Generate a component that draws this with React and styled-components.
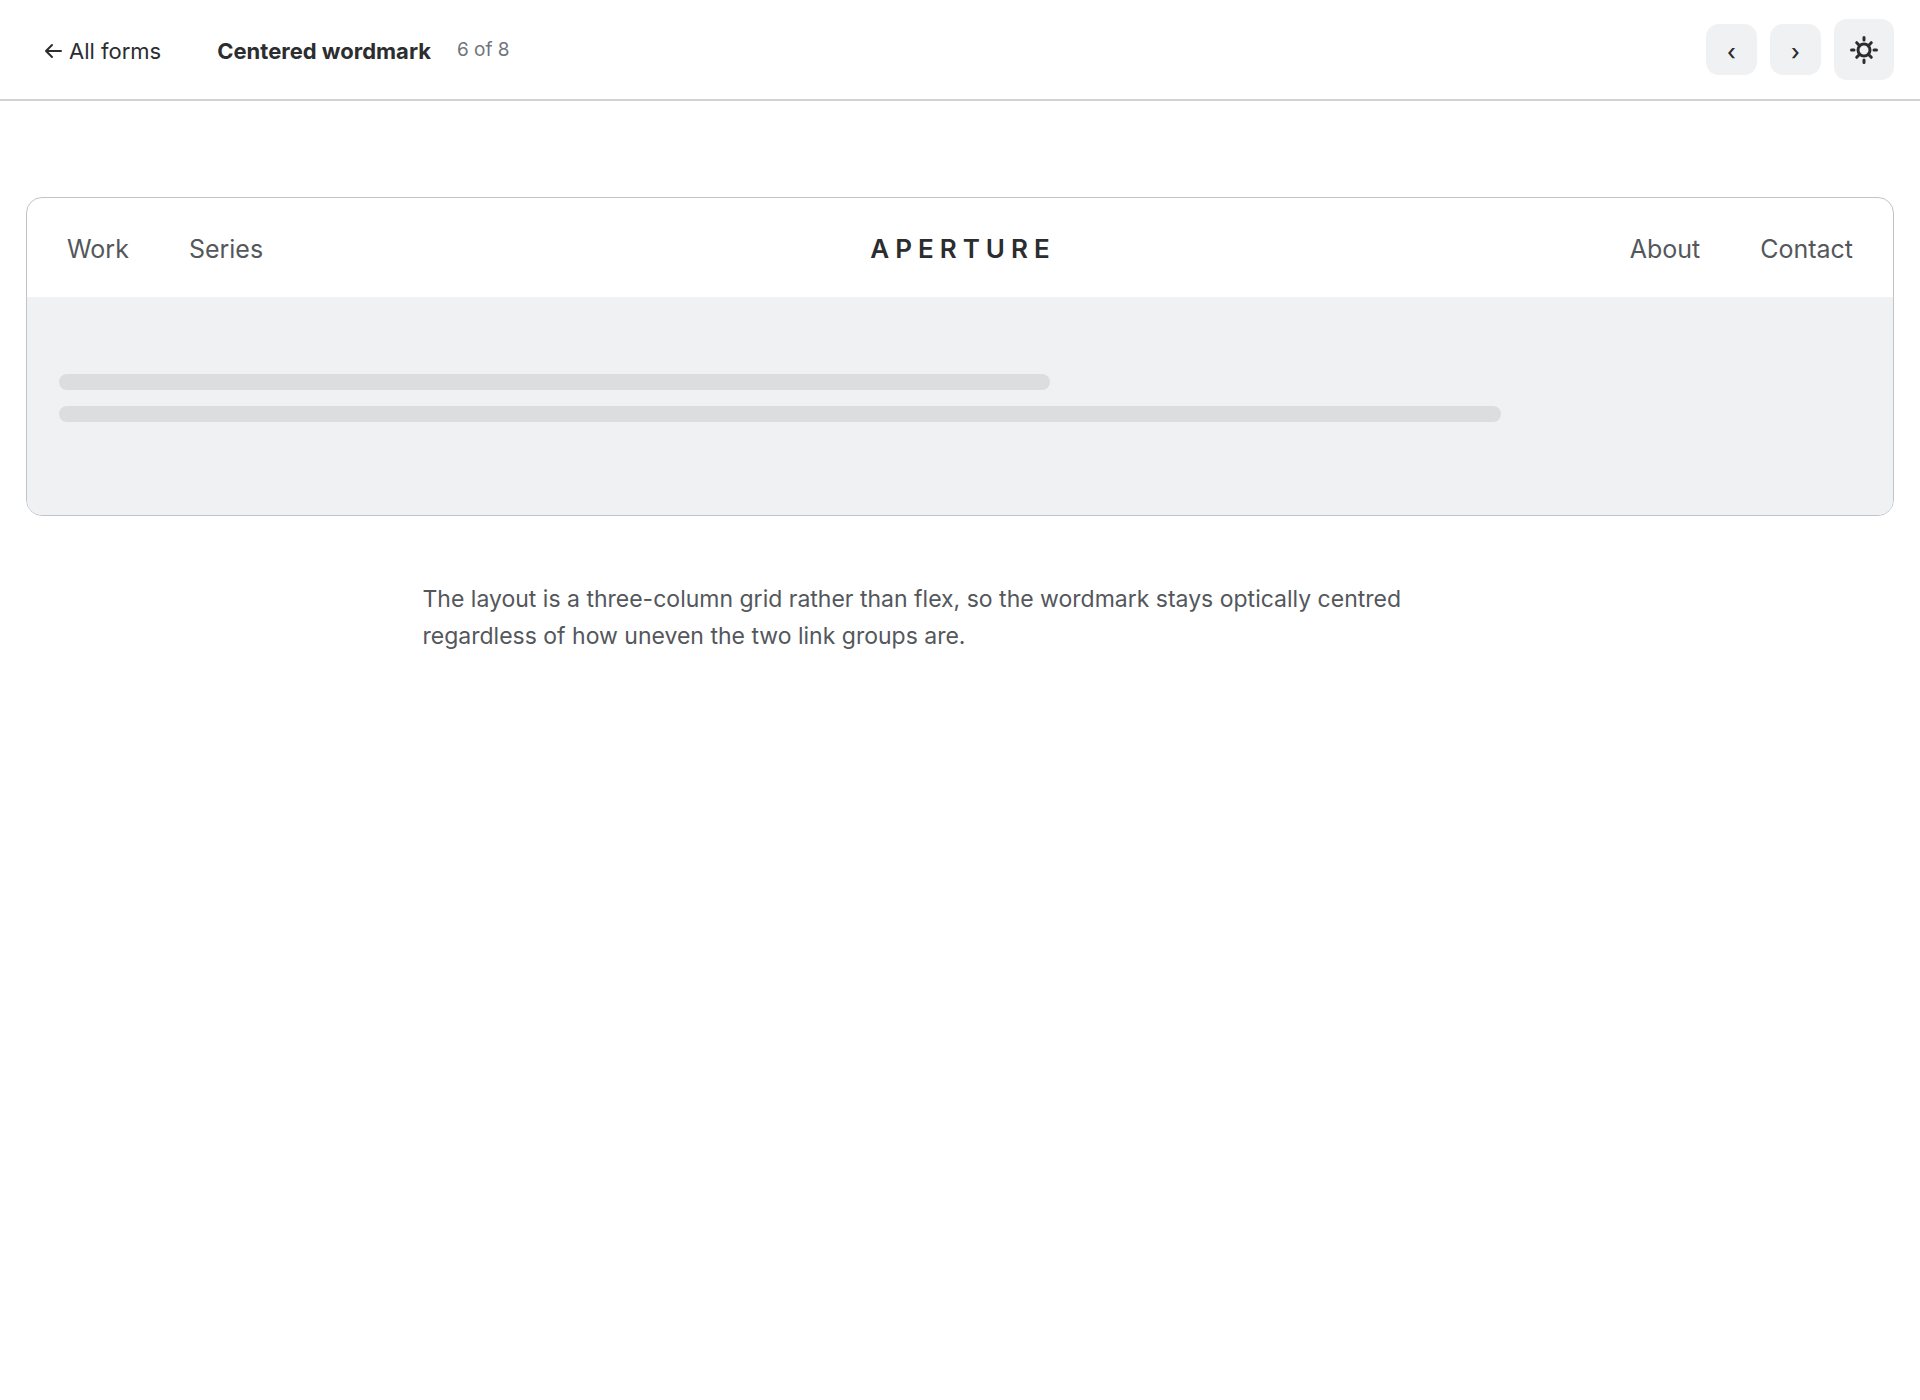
import styled, { createGlobalStyle } from 'styled-components'

const GlobalStyle = createGlobalStyle`
	* {
		box-sizing: border-box;
	}

	body {
		margin: 0;
		background: #ffffff;
		color: #2b2d2f;
		font-family: Inter, 'Liberation Sans', sans-serif;
	}
`

const StyledHeader = styled.header`
	display: flex;
	align-items: center;
	padding: 19px 26px;
	border-bottom: 2px solid #cfd1d2;
`

const StyledBackLink = styled.a`
	display: flex;
	align-items: center;
	gap: 7px;
	padding: 2px 18px 0;
	font-size: 22px;
	line-height: 32px;
	color: #2b2d2f;
	text-decoration: none;
`

const StyledBackIcon = styled.svg`
	width: 18px;
	height: 18px;
	fill: none;
	stroke: currentColor;
	stroke-width: 2;
	stroke-linecap: round;
	stroke-linejoin: round;
`

const StyledTitle = styled.h1`
	margin: 0 0 0 38px;
	padding-top: 2px;
	font-weight: 700;
	font-size: 22px;
	line-height: 32px;
`

const StyledCounter = styled.span`
	margin-left: 26px;
	font-size: 19px;
	line-height: 32px;
	color: #70757a;
`

const StyledActions = styled.div`
	display: flex;
	align-items: center;
	gap: 13px;
	margin-left: auto;
`

const StyledIconButton = styled.button`
	display: flex;
	align-items: center;
	justify-content: center;
	width: 51px;
	height: 51px;
	padding: 4px 0 0;
	border: none;
	border-radius: 13px;
	background: #f0f1f3;
	color: #2b2d2f;
	font-family: inherit;
	font-weight: 500;
	font-size: 22px;
	line-height: 32px;
	cursor: pointer;
`

const StyledThemeButton = styled(StyledIconButton)`
	width: 60px;
	height: 61px;
	padding: 0;
`

const StyledSunIcon = styled.svg`
	width: 30px;
	height: 30px;
	fill: none;
	stroke: currentColor;
	stroke-width: 3;
	stroke-linecap: round;
`

const StyledMain = styled.main`
	padding: 96px 26px;
`

const StyledPreview = styled.section`
	overflow: hidden;
	border: 1px solid #c0c4c9;
	border-radius: 16px;
`

const StyledNav = styled.nav`
	display: grid;
	grid-template-columns: 1fr auto 1fr;
	align-items: baseline;
	padding: 31px 40px 28px;
`

const StyledLinkGroup = styled.div`
	display: flex;
	justify-content: ${({ $end }) => ($end ? 'flex-end' : 'flex-start')};
	gap: 60px;
`

const StyledNavLink = styled.a`
	font-size: 25px;
	line-height: 39px;
	color: #54575b;
	text-decoration: none;
`

const StyledWordmark = styled.span`
	padding-left: 6px;
	font-weight: 600;
	font-size: 26px;
	line-height: 39px;
	letter-spacing: 6px;
`

const StyledPlaceholder = styled.div`
	display: flex;
	flex-direction: column;
	gap: 16px;
	padding: 77px 32px 93px;
	background: #f0f1f3;
`

const StyledLine = styled.div`
	width: ${({ $width }) => $width};
	height: 16px;
	border-radius: 8px;
	background: #dcddde;
`

const StyledNote = styled.p`
	max-width: 1075px;
	margin: 65px auto 0;
	font-size: 23px;
	line-height: 37px;
	color: #54575b;
`

const App = () => {
	return (
		<>
			<GlobalStyle />
			<StyledHeader>
				<StyledBackLink href="#forms">
					<StyledBackIcon viewBox="0 0 18 18" aria-hidden="true">
						<path d="M17 9H2M8 3L2 9l6 6" />
					</StyledBackIcon>
					All forms
				</StyledBackLink>
				<StyledTitle>Centered wordmark</StyledTitle>
				<StyledCounter>6 of 8</StyledCounter>
				<StyledActions>
					<StyledIconButton type="button" aria-label="Previous form">
						‹
					</StyledIconButton>
					<StyledIconButton type="button" aria-label="Next form">
						›
					</StyledIconButton>
					<StyledThemeButton type="button" aria-label="Toggle theme">
						<StyledSunIcon viewBox="0 0 30 30" aria-hidden="true">
							<circle cx="15" cy="15" r="6" />
							<path d="M15 2.5v2.5M15 25v2.5M2.5 15h2.5M25 15h2.5M7.7 7.7l3 3M19.3 19.3l3 3M7.7 22.3l3-3M19.3 10.7l3-3" />
						</StyledSunIcon>
					</StyledThemeButton>
				</StyledActions>
			</StyledHeader>
			<StyledMain>
				<StyledPreview>
					<StyledNav>
						<StyledLinkGroup>
							<StyledNavLink href="#work">Work</StyledNavLink>
							<StyledNavLink href="#series">Series</StyledNavLink>
						</StyledLinkGroup>
						<StyledWordmark>APERTURE</StyledWordmark>
						<StyledLinkGroup $end>
							<StyledNavLink href="#about">About</StyledNavLink>
							<StyledNavLink href="#contact">Contact</StyledNavLink>
						</StyledLinkGroup>
					</StyledNav>
					<StyledPlaceholder>
						<StyledLine $width="55%" />
						<StyledLine $width="80%" />
					</StyledPlaceholder>
				</StyledPreview>
				<StyledNote>
					The layout is a three-column grid rather than flex, so the wordmark stays optically centred
					regardless of how uneven the two link groups are.
				</StyledNote>
			</StyledMain>
		</>
	)
}

export default App
